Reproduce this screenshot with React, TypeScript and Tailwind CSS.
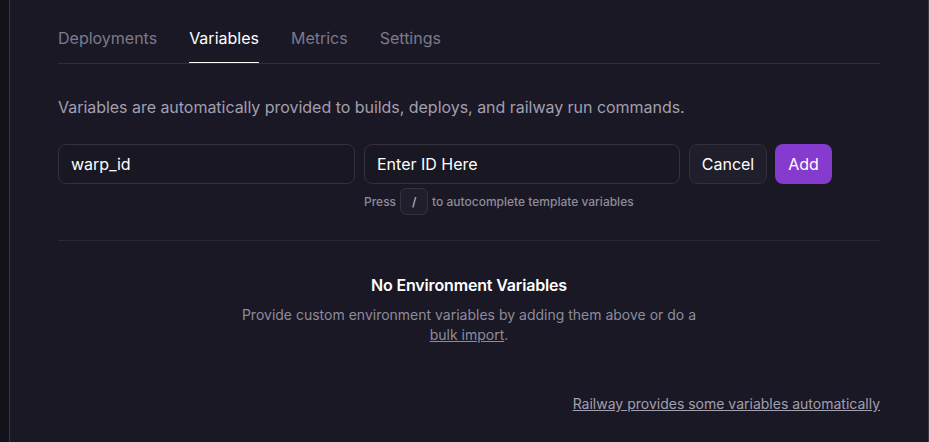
import React from "react";

export default function App() {
  const tabs = ["Deployments", "Variables", "Metrics", "Settings"];
  return (
    <div
      className="flex h-[442px] w-[929px] overflow-hidden bg-[#1a1824] text-white"
      style={{ fontFamily: "Inter, 'Noto Sans', sans-serif" }}
    >
      <div className="w-[9px] shrink-0 bg-[#13121b]" />
      <div className="w-px shrink-0 bg-[#3a3847]" />
      <div className="flex-1 px-[48px]">
        <div className="flex gap-8 border-b border-[#2f2d3b] pt-[26px]">
          {tabs.map((t) => (
            <div
              key={t}
              className={
                t === "Variables"
                  ? "border-b border-white pb-3 text-base leading-6 text-white"
                  : "border-b border-transparent pb-3 text-base leading-6 text-[#7d7a8c]"
              }
            >
              {t}
            </div>
          ))}
        </div>
        <p className="mt-[31px] text-base leading-6 tracking-[-0.002em] text-[#a29fb0]">
          Variables are automatically provided to builds, deploys, and railway run commands.
        </p>
        <div className="mt-[25px] flex">
          <div className="flex h-10 w-[297px] items-center rounded-lg border border-[#34313f] bg-[#191722] px-[12px] text-base text-white">
            warp_id
          </div>
          <div className="ml-[9px] flex flex-col">
            <div className="flex h-10 w-[316px] items-center rounded-lg border border-[#34313f] bg-[#191722] px-[12px] text-base text-white">
              Enter ID Here
            </div>
            <div className="mt-1 flex items-center gap-[4px] text-xs font-medium text-[#8e8b9c]">
              <span>Press</span>
              <span className="flex h-[27px] w-[28px] items-center justify-center rounded-md border border-[#34313f] bg-[#201e2b] text-[#b9b6c6]">
                /
              </span>
              <span>to autocomplete template variables</span>
            </div>
          </div>
          <div className="ml-[9px] flex h-10 w-[78px] items-center justify-center rounded-lg border border-[#33303e] bg-[#201e2b] text-base text-white">
            Cancel
          </div>
          <div className="ml-2 flex h-10 w-[57px] items-center justify-center rounded-lg bg-[#853bce] text-base text-white">
            Add
          </div>
        </div>
        <div className="mt-[25px] h-px bg-[#2a2835]" />
        <div className="flex flex-col items-center">
          <div className="mt-[32px] text-base font-semibold leading-6 tracking-[-0.01em] text-white">
            No Environment Variables
          </div>
          <p className="mt-2 max-w-[470px] text-center text-sm leading-5 text-[#8e8b9c]">
            Provide custom environment variables by adding them above or do a{" "}
            <span className="underline">bulk import</span>.
          </p>
        </div>
        <div className="mt-[49px] flex justify-end">
          <span className="text-sm leading-5 text-[#a29fb0] underline">
            Railway provides some variables automatically
          </span>
        </div>
      </div>
      <div className="w-px shrink-0 bg-[#3a3847]" />
    </div>
  );
}
